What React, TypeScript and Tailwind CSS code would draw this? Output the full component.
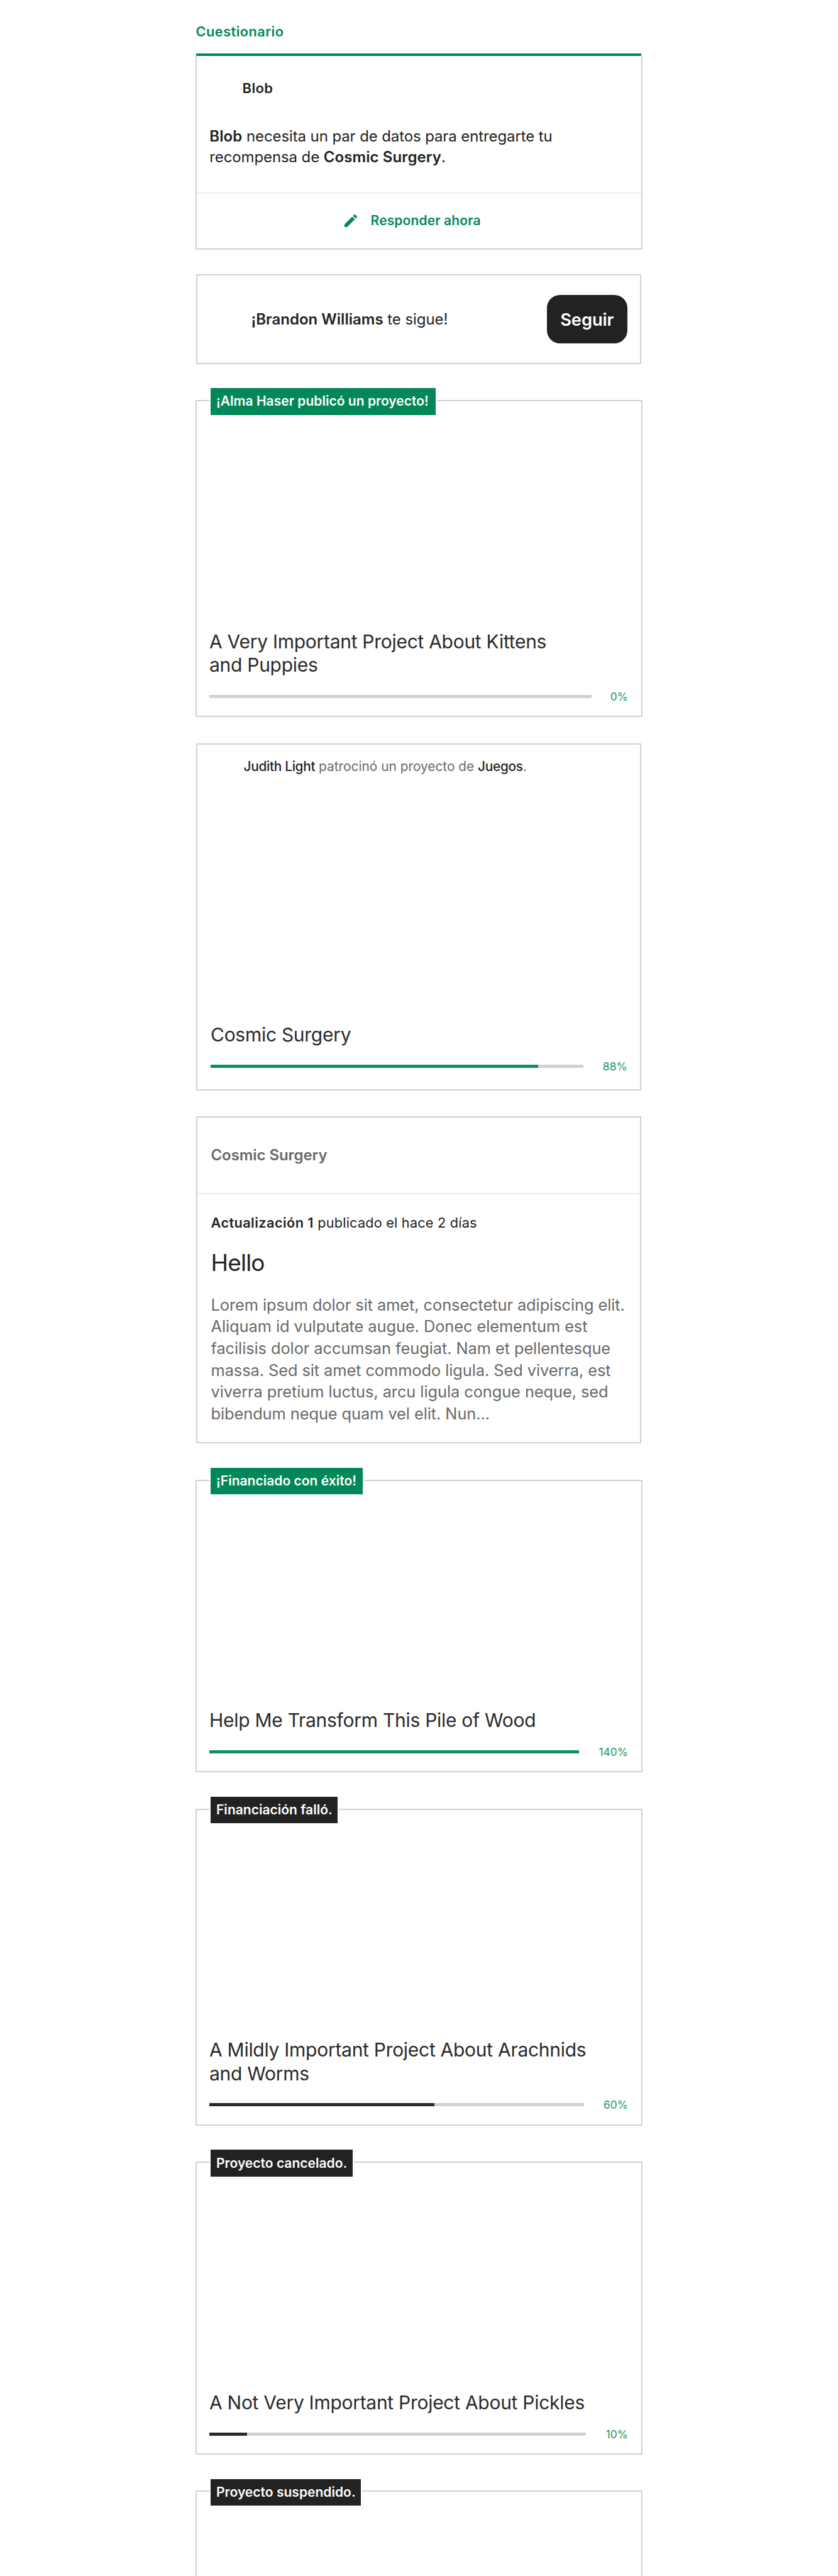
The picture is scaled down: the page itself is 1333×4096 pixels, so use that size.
import type { ReactNode } from "react";

function PencilIcon() {
  return (
    <svg viewBox="3 3 18 18" className="size-5 shrink-0" fill="currentColor">
      <path d="M3 17.25V21h3.75L17.81 9.94l-3.75-3.75L3 17.25zM20.71 7.04a1 1 0 0 0 0-1.41l-2.34-2.34a1 1 0 0 0-1.41 0l-1.83 1.83 3.75 3.75 1.83-1.83z" />
    </svg>
  );
}

type BarProps = { percent: number; width: string; fill: string };

function ProgressRow({ percent, width, fill }: BarProps) {
  return (
    <div className="flex h-[21px] items-center justify-between">
      <div className={`h-[5px] bg-[#d1d1d1] ${width}`}>
        <div className={`h-full ${fill}`} style={{ width: `${Math.min(percent, 100)}%` }} />
      </div>
      <span className="text-[17.4px] leading-[21px] tracking-[0.05px] text-[#1a9668]">{percent}%</span>
    </div>
  );
}

function Title({ children }: { children: ReactNode }) {
  return <h2 className="mb-[20.6px] text-[30px] leading-[37.3px] tracking-[-0.28px] text-[#2a2a2a]">{children}</h2>;
}

function Badge({ width, color, children }: { width: string; color: string; children: ReactNode }) {
  return (
    <div
      className={`absolute -top-[22.8px] left-5 flex h-[46.4px] items-center border-2 border-white pl-[9px] text-[21px] font-semibold leading-[30px] tracking-[0.02px] whitespace-nowrap text-white ${width} ${color}`}
    >
      {children}
    </div>
  );
}

type ProjectProps = BarProps & {
  badge: string;
  badgeWidth: string;
  badgeColor: string;
  height: string;
  children: ReactNode;
};

function ProjectCard({ badge, badgeWidth, badgeColor, height, children, ...bar }: ProjectProps) {
  return (
    <article
      className={`relative mt-[57.3px] flex w-[711.4px] flex-col justify-end border-2 border-[#d1d1d1] pr-[21.4px] pb-[20.4px] pl-5 ${height}`}
    >
      <Badge width={badgeWidth} color={badgeColor}>{badge}</Badge>
      <Title>{children}</Title>
      <ProgressRow {...bar} />
    </article>
  );
}

export default function App() {
  return (
    <main className="flex h-[4096px] w-[1333px] flex-col overflow-hidden bg-white pl-[311px] font-['Inter',sans-serif] text-[#222222]">
      <header className="h-[85px] shrink-0 pt-[35px] pl-[0.6px]">
        <h1 className="text-[21.75px] font-semibold leading-[30px] tracking-[0.45px] text-[#028858]">Cuestionario</h1>
      </header>

      <div className="ml-[1.2px] h-[3.5px] w-[708.2px] shrink-0 bg-[#028858]" />
      <article className="flex h-[308.1px] w-[711.4px] shrink-0 flex-col border-x-2 border-b-2 border-[#d1d1d1] pt-[36.8px]">
        <p className="pl-[72.5px] text-[22px] font-semibold leading-[30px] tracking-[0.4px]">Blob</p>
        <p className="mt-[46.2px] pl-[20.3px] text-[24px] leading-[32.1px] tracking-[-0.11px]">
          <b className="font-semibold tracking-[0.1px]">Blob</b> necesita un par de datos para entregarte tu
          <br />
          recompensa de <b className="font-semibold tracking-[0.1px]">Cosmic Surgery</b>.
        </p>
        <div className="mt-auto flex h-[88.8px] items-center gap-[22px] border-t-2 border-[#ededf2] pb-[1.4px] pl-[234.6px] text-[#028858]">
          <PencilIcon />
          <span className="text-[21px] font-semibold leading-[30px] tracking-[0.12px]">Responder ahora</span>
        </div>
      </article>

      <article className="mt-[39.9px] ml-px flex h-[142.3px] w-[708.4px] shrink-0 items-center justify-between border-2 border-[#d1d1d1] pr-[20.4px] pl-[85.5px]">
        <p className="text-[24px] leading-[32px] tracking-[-0.07px]">
          <b className="font-semibold tracking-[0.02px]">¡Brandon Williams</b> te sigue!
        </p>
        <button className="h-[76.4px] w-[128.5px] rounded-[20.8px] bg-[#222222] text-[27.4px] font-semibold leading-[34px] tracking-[-0.12px] text-white">
          Seguir
        </button>
      </article>

      <ProjectCard
        badge="¡Alma Haser publicó un proyecto!" badgeWidth="w-[361.5px]" badgeColor="bg-[#028858]"
        height="h-[504.2px] shrink-0" percent={0} width="w-[607.8px]" fill="bg-[#0c8f5f]"
      >
        A Very Important Project About Kittens
        <br />
        and Puppies
      </ProjectCard>

      <article className="mt-[41.6px] ml-px flex h-[552px] w-[708.4px] shrink-0 flex-col border-2 border-[#d1d1d1] pt-[19.8px] pr-[20.8px] pb-[26.2px] pl-[21px]">
        <p className="pl-[52.6px] text-[20.8px] leading-[30px] tracking-[0.02px] text-[#696969]">
          <span className="font-medium tracking-[-0.3px] text-[#222222]">Judith Light</span> patrocinó un proyecto de{" "}
          <span className="font-medium tracking-[-0.3px] text-[#222222]">Juegos</span>.
        </p>
        <div className="mt-auto">
          <Title>Cosmic Surgery</Title>
          <ProgressRow percent={88} width="w-[592.5px]" fill="bg-[#0c8f5f]" />
        </div>
      </article>

      <article className="mt-[41.6px] ml-px h-[519.8px] w-[708.4px] shrink-0 border-2 border-[#d1d1d1]">
        <div className="h-[121.3px] border-b-2 border-[#ededf2] pt-[44.5px] pl-[21.5px] text-[24px] font-semibold leading-[30px] tracking-[-0.07px] text-[#696969]">
          Cosmic Surgery
        </div>
        <div className="pt-[29.9px] pl-[21.5px]">
          <p className="text-[21.7px] leading-[30px] tracking-[0.2px]">
            <b className="font-semibold tracking-[0.43px]">Actualización 1</b> publicado el hace 2 días
          </p>
          <h2 className="mt-[27.8px] text-[37px] leading-[44px] tracking-[-0.8px]">Hello</h2>
          <p className="mt-[27.2px] text-[25.4px] leading-[34.68px] tracking-[-0.08px] text-[#696969]">
            Lorem ipsum dolor sit amet, consectetur adipiscing elit.
            <br />
            Aliquam id vulputate augue. Donec elementum est
            <br />
            facilisis dolor accumsan feugiat. Nam et pellentesque
            <br />
            massa. Sed sit amet commodo ligula. Sed viverra, est
            <br />
            viverra pretium luctus, arcu ligula congue neque, sed
            <br />
            bibendum neque quam vel elit. Nun...
          </p>
        </div>
      </article>

      <ProjectCard
        badge="¡Financiado con éxito!" badgeWidth="w-[246.3px]" badgeColor="bg-[#028858]"
        height="h-[465.9px] shrink-0" percent={140} width="w-[587.8px]" fill="bg-[#0c8f5f]"
      >
        Help Me Transform This Pile of Wood
      </ProjectCard>

      <ProjectCard
        badge="Financiación falló." badgeWidth="w-[206.3px]" badgeColor="bg-[#222222]"
        height="h-[504.1px] shrink-0" percent={60} width="w-[596.3px]" fill="bg-[#2a2a2a]"
      >
        A Mildly Important Project About Arachnids
        <br />
        and Worms
      </ProjectCard>

      <ProjectCard
        badge="Proyecto cancelado." badgeWidth="w-[229.6px]" badgeColor="bg-[#222222]"
        height="h-[466px] shrink-0" percent={10} width="w-[598.7px]" fill="bg-[#2a2a2a]"
      >
        A Not Very Important Project About Pickles
      </ProjectCard>

      <article className="relative mt-[57.3px] w-[711.4px] flex-1 border-x-2 border-t-2 border-[#d1d1d1]">
        <Badge width="w-[243.4px]" color="bg-[#222222]">Proyecto suspendido.</Badge>
      </article>
    </main>
  );
}
